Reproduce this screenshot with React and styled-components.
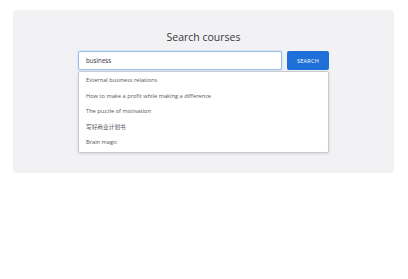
import React from "react";
import styled, { createGlobalStyle } from "styled-components";

const GlobalStyle = createGlobalStyle`
  html, body {
    margin: 0;
    padding: 0;
    background: #ffffff;
  }
  body {
    font-family: "Open Sans", "Noto Sans CJK SC", sans-serif;
  }
`;

const Page = styled.div`
  padding: 10px 14px 0 13px;
`;

const Panel = styled.section`
  height: 163px;
  box-sizing: border-box;
  background: #f2f1f3;
  border-radius: 4px;
  padding-top: 21px;
  display: flex;
  flex-direction: column;
  align-items: center;
`;

const Title = styled.h1`
  margin: 0;
  font-size: 10.5px;
  line-height: 13px;
  font-weight: 500;
  color: #38383d;
`;

const SearchBox = styled.div`
  margin-top: 7px;
  width: 251px;
  display: flex;
  flex-direction: column;
  gap: 1px;
`;

const SearchRow = styled.div`
  display: flex;
  gap: 5px;
  height: 19px;
`;

const Input = styled.input`
  flex: 1;
  min-width: 0;
  box-sizing: border-box;
  height: 19px;
  padding: 0 7px;
  border: 1px solid #9dbbe8;
  border-radius: 2px;
  background: #ffffff;
  font-family: "Open Sans", sans-serif;
  font-size: 6.2px;
  color: #333338;
  outline: none;
  box-shadow: 0 0 0 1px #dde8f8;
`;

const Button = styled.button`
  width: 42px;
  height: 19px;
  border: none;
  border-radius: 2px;
  background: #1f6fd8;
  color: #ffffff;
  font-family: "Open Sans", sans-serif;
  font-size: 5.6px;
  letter-spacing: 0.2px;
  padding: 0;
`;

const Dropdown = styled.ul`
  list-style: none;
  margin: 0;
  padding: 1px 0 1.5px;
  background: #ffffff;
  border: 1px solid #c9c9ce;
  border-radius: 2px;
  box-shadow: 0 1px 3px rgba(0, 0, 0, 0.12);
`;

const Item = styled.li`
  height: 15.5px;
  line-height: 15.5px;
  padding: 0 7px;
  font-size: 5.7px;
  color: #55555c;
  white-space: nowrap;
`;

const suggestions = [
  "External business relations",
  "How to make a profit while making a difference",
  "The puzzle of motivation",
  "写好商业计划书",
  "Brain magic",
];

export default function App() {
  return (
    <>
      <GlobalStyle />
      <Page>
        <Panel>
          <Title>Search courses</Title>
          <SearchBox>
            <SearchRow>
              <Input defaultValue="business" />
              <Button>SEARCH</Button>
            </SearchRow>
            <Dropdown>
              {suggestions.map((s) => (
                <Item key={s}>{s}</Item>
              ))}
            </Dropdown>
          </SearchBox>
        </Panel>
      </Page>
    </>
  );
}
